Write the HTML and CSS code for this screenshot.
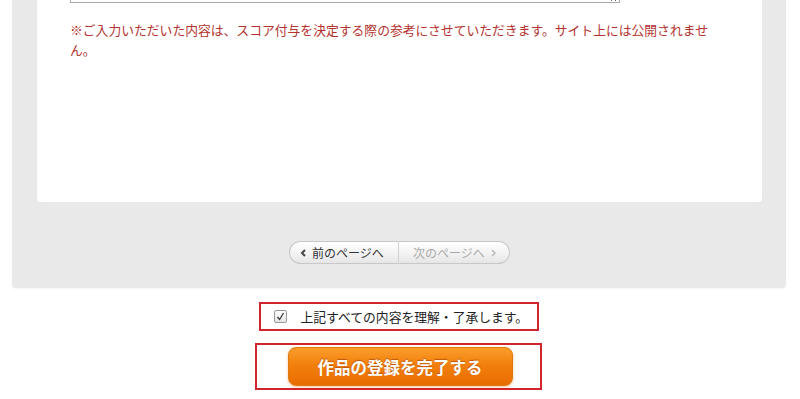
FILE: index.html
```html
<!DOCTYPE html>
<html lang="ja">
<head>
<meta charset="utf-8">
<title>作品の登録</title>
<link rel="stylesheet" href="styles.css">
</head>
<body>
<div class="panel">
  <div class="card">
    <textarea class="comment"></textarea>
    <p class="note">※ご入力いただいた内容は、スコア付与を決定する際の参考にさせていただきます。サイト上には公開されません。</p>
  </div>
  <div class="pager">
    <a class="pager-btn prev" href="#">
      <svg class="chev" width="7" height="8" viewBox="0 0 7 8"><path d="M5 1 L2 4 L5 7" fill="none" stroke="#444" stroke-width="2"/></svg>
      前のページへ
    </a>
    <span class="pager-btn next">
      次のページへ
      <svg class="chev" width="7" height="8" viewBox="0 0 7 8"><path d="M2 1 L5 4 L2 7" fill="none" stroke="#bbb" stroke-width="1.6"/></svg>
    </span>
  </div>
</div>
<div class="actions">
  <label class="agree">
    <span class="check">
      <svg width="9" height="9" viewBox="0 0 9 9"><path d="M1.5 5 L3.6 7.5 L7.5 1" fill="none" stroke="#333" stroke-width="1.2"/></svg>
    </span>
    上記すべての内容を理解・了承します。
  </label>
  <div class="submit-wrap">
    <button class="submit" type="button">作品の登録を完了する</button>
  </div>
</div>
</body>
</html>
```
FILE: styles.css
```css
html, body {
  margin: 0;
  padding: 0;
  background: #fff;
  font-family: "Noto Sans CJK JP", "Noto Sans", sans-serif;
  color: #333;
  overflow: hidden;
}

.panel {
  margin: -120px 14px 0 12px;
  padding: 20px 24px 24px 25px;
  background: #e9e9e9;
  border-radius: 0 0 4px 4px;
  box-shadow: 0 1px 1px rgba(0, 0, 0, 0.04);
}

.card {
  background: #fff;
  border-radius: 0 0 4px 4px;
  padding: 20px 20px 142px 33px;
}

.comment {
  display: block;
  box-sizing: border-box;
  width: 550px;
  height: 83px;
  margin: 0;
  border: 1px solid #a9a9a9;
  border-radius: 0;
  resize: vertical;
}

.note {
  margin: 17px 0 0;
  width: 650px;
  font-size: 12.8px;
  line-height: 20px;
  color: #b3332f;
}

.pager {
  display: flex;
  justify-content: center;
  margin-top: 39px;
}

.pager-btn {
  display: flex;
  align-items: center;
  gap: 5px;
  box-sizing: border-box;
  height: 23px;
  font-size: 12px;
  text-decoration: none;
  border: 1px solid #c8c8c8;
  background: linear-gradient(#ffffff, #f1f1f1 60%, #e6e6e6);
}

.pager-btn.prev {
  width: 110px;
  padding-left: 10px;
  color: #333;
  border-radius: 12px 0 0 12px;
  border-right: 1px solid #d2d2d2;
}

.pager-btn.next {
  width: 111px;
  padding-left: 14px;
  color: #aaa;
  border-left: none;
  border-radius: 0 12px 12px 0;
}

.chev {
  display: block;
}

.actions {
  display: flex;
  flex-direction: column;
  align-items: center;
  margin-top: 14px;
}

.agree {
  display: flex;
  align-items: center;
  box-sizing: border-box;
  width: 280px;
  height: 29px;
  margin-left: -3px;
  padding-left: 13px;
  border: 2px solid #d3232c;
  font-size: 12.8px;
  color: #222;
}

.check {
  display: flex;
  align-items: center;
  justify-content: center;
  box-sizing: border-box;
  width: 13px;
  height: 13px;
  margin-right: 14px;
  border: 1px solid #9a9a9a;
  border-radius: 2px;
  background: linear-gradient(#fdfdfd, #e4e4e4);
}

.submit-wrap {
  box-sizing: border-box;
  width: 287px;
  height: 47px;
  margin-top: 12px;
  margin-left: -4px;
  padding: 2px 0 0 31px;
  border: 2px solid #d3232c;
}

.submit {
  display: block;
  width: 225px;
  height: 39px;
  border: 1px solid #e07a10;
  border-radius: 8px;
  background: linear-gradient(#fb9d2c, #f2800c 45%, #e86c00);
  box-shadow: 0 1px 3px rgba(230, 120, 20, 0.45);
  color: #fff;
  font-family: "Noto Sans CJK JP", "Noto Sans", sans-serif;
  font-size: 16.5px;
  font-weight: bold;
  text-shadow: 0 -1px 1px rgba(150, 60, 0, 0.6);
  padding: 0;
  cursor: pointer;
}
```
